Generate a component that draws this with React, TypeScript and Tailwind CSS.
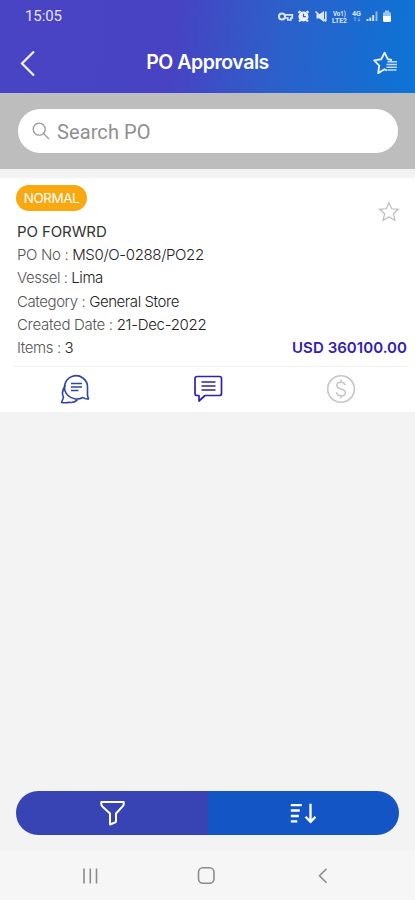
import React from 'react';

interface Detail {
  label: string;
  value: string;
  tracking: string;
}

const details: Detail[] = [
  { label: 'PO No', value: 'MS0/O-0288/PO22', tracking: 'tracking-[-0.35px]' },
  { label: 'Vessel', value: 'Lima', tracking: 'tracking-[-0.45px]' },
  { label: 'Category', value: 'General Store', tracking: 'tracking-[-0.42px]' },
  { label: 'Created Date', value: '21-Dec-2022', tracking: 'tracking-[-0.3px]' },
];

const StatusIcons: React.FC = () => (
  <svg className="h-4 w-[116px]" viewBox="0 0 116 16" fill="none" stroke="#dbe6fb">
    {/* vpn key */}
    <circle cx="4" cy="8.5" r="3" strokeWidth="2" />
    <path d="M7 6.800h7.300v3.200h-1.500v2h-3v-2H7" strokeWidth="1.700" />
    {/* alarm */}
    <circle cx="25.500" cy="8.500" r="5" fill="#edf3ff" stroke="none" />
    <path d="M20.500 5l2-2M30.500 5l-2-2M21 13.500l2-2M30 13.500l-2-2" strokeWidth="2.200" />
    <path d="M25.500 5.800v2.900h2.300" stroke="#315ccb" strokeWidth="1.200" />
    {/* muted speaker */}
    <path d="M38.500 6h3l4.500-3v11l-4.500-3.500h-3z" fill="#dbe6fb" stroke="none" />
    <path d="M37.500 3.500l10.500 10M47.800 3.500v9.500" strokeWidth="1.600" />
    {/* signal */}
    <path d="M89.500 13v-2M92.300 13V9.500M95.200 13V7" strokeWidth="1.900" />
    <path d="M98.500 13V3.500" strokeWidth="1.900" opacity=".65" />
    {/* battery */}
    <rect x="107" y="2.500" width="4" height="2" rx=".5" fill="#a9c8ef" stroke="none" />
    <rect x="105" y="4" width="8" height="10" rx="1.800" fill="#9dc2ee" stroke="none" />
    <path d="M105 8h8v4.200a1.800 1.800 0 0 1-1.800 1.800h-4.400a1.800 1.800 0 0 1-1.800-1.800z" fill="#fff" stroke="none" />
    <g fill="#dbe6fb" stroke="none" fontFamily="Roboto, sans-serif" fontWeight="700">
      <text x="55" y="7.600" fontSize="6.500" textLength="13" lengthAdjust="spacingAndGlyphs">Vo1)</text>
      <text x="54" y="14.800" fontSize="6.500" textLength="15" lengthAdjust="spacingAndGlyphs">LTE2</text>
      <text x="74" y="8" fontSize="7" textLength="9" lengthAdjust="spacingAndGlyphs">4G</text>
    </g>
    <path d="M77 13V9.500M75.800 10.500L77 9.300l1.200 1.200M81 9.500V13M79.800 12L81 13.200l1.200-1.200" strokeWidth="0.8" opacity=".6" />
  </svg>
);

const Header: React.FC = () => (
  <header className="h-[93px] bg-[linear-gradient(97deg,#4844c4_0%,#4743c2_42%,#2d5fca_66%,#0c74d5_100%)] text-white">
    <div className="flex h-8 items-center justify-between pr-[21px] pl-[25px] font-[Roboto,sans-serif]">
      <span className="text-[15px] tracking-[-0.1px] text-[#e7e7fb]">15:05</span>
      <StatusIcons />
    </div>
    <div className="grid h-[61px] grid-cols-[60px_1fr_60px] items-center">
      <svg className="ml-5 h-7 w-4" viewBox="0 0 16 28" fill="none" stroke="#f1f1ff" strokeWidth="2.200">
        <path d="M14 2.500L2 14.500l12 12" />
      </svg>
      <h1 className="mt-px text-center text-[19.5px] font-semibold tracking-[-0.45px]">PO Approvals</h1>
      <svg className="ml-[17px] h-7 w-7" viewBox="0 0 28 28" fill="none" stroke="#e6effc" strokeWidth="1.900" strokeLinejoin="round">
        <path d="M15 21.500l-2.500-1.200-6.300 3.800 1-7.500-5-5.200 7-1.200 3.400-6.500 3.200 6.500 4.200.8" />
        <path d="M15.500 12.800h9.500M14.500 15.500h10.500M14.500 18.200h10.500M15.500 20.900h9" strokeWidth="1.500" opacity=".85" />
      </svg>
    </div>
  </header>
);

const SearchBar: React.FC = () => (
  <div className="h-[76px] bg-[#bdbdbd] pt-4 pr-[17px] pl-[18px]">
    <label className="flex h-11 items-center rounded-full bg-white pl-[14px]">
      <svg className="h-[18px] w-[18px]" viewBox="0 0 18 18" fill="none" stroke="#9a9a9a" strokeWidth="1.300">
        <circle cx="7.200" cy="7.200" r="6" />
        <path d="M11.500 11.500l5.500 5.500" />
      </svg>
      <input
        className="mt-0.5 ml-[7px] w-64 font-[Roboto,sans-serif] text-[20px] tracking-[0.1px] outline-none placeholder:text-[#8f8f8f]"
        placeholder="Search PO"
      />
    </label>
  </div>
);

const OrderCard: React.FC = () => (
  <section className="h-[234px] bg-white pt-[7px] text-[15px] leading-[23.200px] font-light text-[#555]">
    <div className="relative pr-2 pl-[17px]">
      <span className="-ml-px flex h-[26px] w-[71px] items-center justify-center rounded-full bg-[#f7a90f] pt-px text-[13.500px] font-normal tracking-[-0.5px] text-white">
        NORMAL
      </span>
      <button className="absolute top-4 right-[15px]">
        <svg className="h-[22px] w-[22px]" viewBox="0 0 22 22" fill="none" stroke="#bcbcbc" strokeWidth="1.200">
          <path d="M11 1.800l2.700 6 6.700.5-5 4.400 1.500 6.600L11 15.900l-5.900 3.400 1.500-6.600-5-4.400 6.700-.5z" />
        </svg>
      </button>
      <h2 className="mt-[9px] font-normal tracking-[-0.1px] text-[#333]">PO FORWRD</h2>
      {details.map((item) => (
        <p key={item.label} className={item.tracking}>
          {item.label} : <span className="font-[350] text-[#222]">{item.value}</span>
        </p>
      ))}
      <div className="flex justify-between">
        <p className="tracking-[-0.4px]">
          Items : <span className="font-[350] text-[#222]">3</span>
        </p>
        <strong className="font-semibold tracking-[0.05px] text-[#3022b0]">USD 360100.00</strong>
      </div>
    </div>
    <div className="mt-[7px] mr-[7px] ml-[14px] border-t border-[#efefef]" />
    <div className="grid grid-cols-3 justify-items-center pt-[7px] pr-2 pl-2">
      <svg className="h-[30px] w-[30px]" viewBox="0 0 30 30" fill="none" stroke="#3146a4" strokeWidth="1.600" strokeLinejoin="round">
        <path d="M8 21.500A11.500 11.500 0 1 1 27.500 14v7.500l1 3.500c-2.500.2-4.200-.4-5.500-1.500-4.500 2.500-11 2-15-2z" />
        <path d="M5.500 11.500C2.500 15 2 20 3.500 23.500L1.500 28.500c3.500.3 6 .3 7.500-.3 4 .8 6.500-.2 8.500-2.700" />
        <path d="M11 9.500h11M11 13h11M11 16.500h7.500" />
      </svg>
      <svg className="h-[30px] w-[30px]" viewBox="0 0 30 30" fill="none" stroke="#3022b0" strokeWidth="1.700" strokeLinejoin="round">
        <path d="M4 2.500h22.500a2 2 0 0 1 2 2v15a2 2 0 0 1-2 2H12l-6 5.500v-5.500H4a2 2 0 0 1-2-2v-15a2 2 0 0 1 2-2z" />
        <path d="M8.500 8h14M8.500 12h14M8.500 16h14" strokeWidth="1.500" />
      </svg>
      <svg className="h-[30px] w-[30px]" viewBox="0 0 30 30" fill="none" stroke="#c6c6c6" strokeWidth="1.600">
        <circle cx="15" cy="15" r="13.300" />
        <path d="M19 11.200c-.3-2-1.700-3-4-3-2.500 0-4.200 1.200-4.200 3.200 0 4.500 8.500 2.500 8.500 7 0 2.200-1.700 3.400-4.300 3.400s-4.300-1.200-4.500-3.500M15 5.500v2.700M15 21.800v2.700" />
      </svg>
    </div>
  </section>
);

const ActionBar: React.FC = () => (
  <div className="mx-4 grid h-11 grid-cols-2 overflow-hidden rounded-full">
    <button className="flex items-center justify-center bg-[#3944b4]">
      <svg className="h-[26px] w-[26px]" viewBox="0 0 26 26" fill="none" stroke="#fff" strokeWidth="2" strokeLinejoin="round">
        <path d="M2.300 2h22.400v2c0 1-.4 1.700-1.100 2.400L17 13.500v8l-1 1-5 2V13.500L3.400 6.400C2.700 5.700 2.300 5 2.300 4z" />
      </svg>
    </button>
    <button className="flex items-center justify-center bg-[#1355c4]">
      <svg className="h-[22px] w-[26px]" viewBox="0 0 26 22" fill="none" stroke="#fff" strokeWidth="2.300">
        <path d="M.8 3.200h11M.8 8.500h9M.8 14h8M.8 19.300h6.500M20.500 1.800v18M15.500 14.800l5 5 5-5" />
      </svg>
    </button>
  </div>
);

const NavBar: React.FC = () => (
  <nav className="mt-4 grid h-[49px] grid-cols-3 items-center justify-items-center bg-[#f6f6f6] px-[33px]">
    <svg className="h-5 w-5" viewBox="0 0 20 20" stroke="#8b8b8b" strokeWidth="1.600">
      <path d="M3 2.500v15M9.300 2.500v15M15.500 2.500v15" />
    </svg>
    <svg className="h-5 w-5" viewBox="0 0 20 20" fill="none" stroke="#8b8b8b" strokeWidth="1.600">
      <rect x="1.500" y="1.800" width="15.500" height="15.500" rx="4.500" />
    </svg>
    <svg className="h-5 w-5" viewBox="0 0 20 20" fill="none" stroke="#8b8b8b" strokeWidth="1.600">
      <path d="M12.500 2.700L5.500 9.700l7 7" />
    </svg>
  </nav>
);

const App: React.FC = () => {
  return (
    <div className="flex h-[900px] w-[415px] flex-col overflow-hidden bg-[#f3f3f3] font-[Inter,sans-serif]">
      <Header />
      <SearchBar />
      <main className="flex-1 pt-[9px]">
        <OrderCard />
      </main>
      <ActionBar />
      <NavBar />
    </div>
  );
};

export default App;
